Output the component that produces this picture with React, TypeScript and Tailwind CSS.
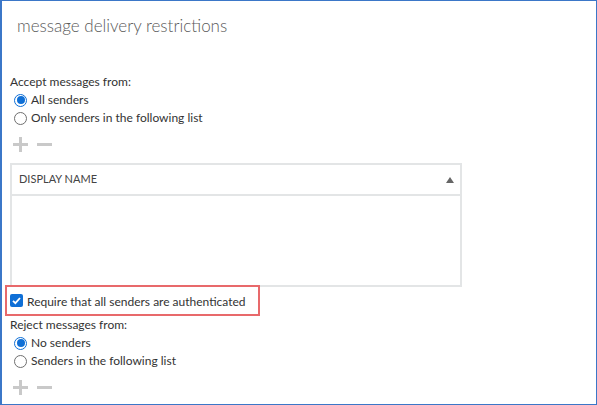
import React from "react";

const font = { fontFamily: 'Lato, "Noto Sans", sans-serif' };

function Radio({ checked }: { checked: boolean }) {
  return checked ? (
    <span className="w-[13px] h-[13px] shrink-0 rounded-full border border-[#0f6fd6] flex items-center justify-center bg-white">
      <span className="w-[8px] h-[8px] rounded-full bg-[#0f6fd6]" />
    </span>
  ) : (
    <span className="w-[13px] h-[13px] shrink-0 rounded-full border border-[#6f6f6f] bg-white" />
  );
}

function PlusMinus() {
  return (
    <div className="flex items-center gap-[9px] pl-[3px] h-[16px]">
      <svg width="15" height="15" viewBox="0 0 15 15">
        <rect x="6" y="0" width="3" height="15" fill="#c9c9c9" />
        <rect x="0" y="6" width="15" height="3" fill="#c9c9c9" />
      </svg>
      <svg width="15" height="15" viewBox="0 0 15 15">
        <rect x="0" y="6" width="15" height="3" fill="#c9c9c9" />
      </svg>
    </div>
  );
}

function RadioRow({ checked, label }: { checked: boolean; label: string }) {
  return (
    <div className="flex items-center gap-[4px] h-[18px] pl-[4px] text-[12px] text-[#333] whitespace-nowrap">
      <Radio checked={checked} />
      <span>{label}</span>
    </div>
  );
}

export default function App() {
  return (
    <div
      className="w-[597px] h-[405px] bg-white border-t border-r border-b border-l-2 border-[#3b77c8] overflow-hidden"
      style={font}
    >
      <div className="pl-[15px] pt-[13px] h-[37px] text-[17px] leading-[24px] font-light text-[#5a5a5a] whitespace-nowrap">
        message delivery restrictions
      </div>
      <div className="pl-[8px] pt-[36px]">
        <div className="h-[17px] text-[12px] leading-[16px] text-[#333]">Accept messages from:</div>
        <RadioRow checked label="All senders" />
        <RadioRow checked={false} label="Only senders in the following list" />
        <div className="mt-[9px]">
          <PlusMinus />
        </div>
        <div className="mt-[11px] w-[452px] h-[124px] border-2 border-[#e3e5e6] flex flex-col">
          <div className="h-[31px] flex items-center justify-between border-b-2 border-[#e3e5e6] pl-[7px] pr-[6px] text-[11px] text-[#444]">
            <span>DISPLAY NAME</span>
            <svg width="8" height="6" viewBox="0 0 8 6">
              <polygon points="4,0 8,6 0,6" fill="#666" />
            </svg>
          </div>
          <div className="flex-1" />
        </div>
        <div className="-mt-[2px] -ml-[5px] w-[255px] h-[31px] border-2 border-[#e8696b] flex items-center gap-[4px] pl-[3px] whitespace-nowrap">
          <span className="w-[13px] h-[13px] shrink-0 rounded-[2px] bg-[#0f6fd6] flex items-center justify-center">
            <svg width="11" height="11" viewBox="0 0 11 11">
              <path d="M2 5.8 L4.4 8.2 L9 3" stroke="white" strokeWidth="1.8" fill="none" />
            </svg>
          </span>
          <span className="text-[12px] text-[#333] pt-[2px]">Require that all senders are authenticated</span>
        </div>
        <div className="h-[17px] mt-[1px] text-[12px] leading-[16px] text-[#333]">Reject messages from:</div>
        <RadioRow checked label="No senders" />
        <RadioRow checked={false} label="Senders in the following list" />
        <div className="mt-[9px]">
          <PlusMinus />
        </div>
      </div>
    </div>
  );
}
